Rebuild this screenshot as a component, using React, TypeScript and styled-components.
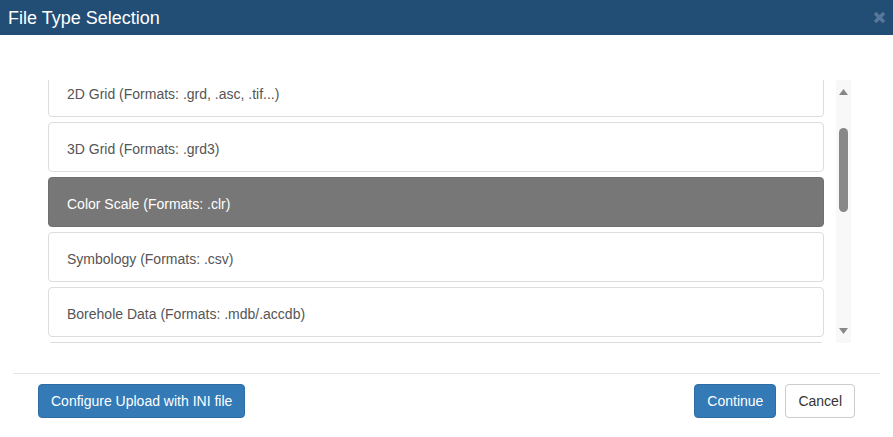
import React, { useLayoutEffect, useRef, useState } from 'react';
import styled, { createGlobalStyle } from 'styled-components';

const GlobalStyle = createGlobalStyle`
  html, body {
    margin: 0;
    padding: 0;
    background: #ffffff;
    font-family: "Liberation Sans", Arial, sans-serif;
  }
  * {
    box-sizing: border-box;
  }
`;

const Dialog = styled.div`
  width: 893px;
  height: 437px;
  background: #ffffff;
  display: flex;
  flex-direction: column;
`;

const Header = styled.div`
  height: 35px;
  background: #224e76;
  display: flex;
  align-items: center;
  justify-content: space-between;
  padding: 0 7px 0 8px;
`;

const Title = styled.h4`
  margin: 0;
  color: #ffffff;
  font-size: 18px;
  font-weight: normal;
  line-height: 1;
`;

const CloseButton = styled.button`
  border: none;
  background: transparent;
  padding: 0;
  margin: 0;
  width: 14px;
  height: 14px;
  display: flex;
  align-items: center;
  justify-content: center;
  cursor: pointer;
`;

const Body = styled.div`
  padding: 45px 42px 30px 48px;
`;

const ListFrame = styled.div`
  height: 263px;
  display: flex;
`;

const ScrollList = styled.div`
  flex: 1;
  height: 100%;
  overflow-y: scroll;
  padding: 35px 12px 35px 0;
  scrollbar-width: none;
  &::-webkit-scrollbar {
    display: none;
  }
`;

const Item = styled.div<{ $selected?: boolean }>`
  height: 50px;
  margin-bottom: 5px;
  padding: 3px 18px 0 18px;
  display: flex;
  align-items: center;
  border: 1px solid ${(p) => (p.$selected ? '#6f6f6f' : '#dddddd')};
  border-radius: 4px;
  background: ${(p) => (p.$selected ? '#777777' : '#ffffff')};
  color: ${(p) => (p.$selected ? '#ffffff' : '#555555')};
  font-size: 14px;
  cursor: pointer;
`;

const Track = styled.div`
  width: 15px;
  height: 100%;
  background: #f8f8f8;
  display: flex;
  flex-direction: column;
`;

const Arrow = styled.div<{ $down?: boolean }>`
  height: 15px;
  display: flex;
  justify-content: center;
  align-items: ${(p) => (p.$down ? 'flex-start' : 'flex-end')};
`;

const Rail = styled.div`
  flex: 1;
  position: relative;
`;

const Thumb = styled.div`
  position: absolute;
  left: 3px;
  right: 3px;
  background: #888888;
  border-radius: 5px;
`;

const Footer = styled.div`
  margin: 0 13px;
  border-top: 1px solid #e5e5e5;
  padding: 10px 25px 0 25px;
  display: flex;
  align-items: center;
  justify-content: space-between;
`;

const ButtonGroup = styled.div`
  display: flex;
  gap: 9px;
`;

const Button = styled.button<{ $primary?: boolean }>`
  height: 34px;
  padding: 0 12px;
  border-radius: 4px;
  font-family: "Liberation Sans", Arial, sans-serif;
  font-size: 14px;
  border: 1px solid ${(p) => (p.$primary ? '#2e6da4' : '#cccccc')};
  background: ${(p) => (p.$primary ? '#337ab7' : '#ffffff')};
  color: ${(p) => (p.$primary ? '#ffffff' : '#333333')};
  cursor: pointer;
`;

const fileTypes = [
  'Point Data (Formats: .csv, .txt)',
  '2D Grid (Formats: .grd, .asc, .tif...)',
  '3D Grid (Formats: .grd3)',
  'Color Scale (Formats: .clr)',
  'Symbology (Formats: .csv)',
  'Borehole Data (Formats: .mdb/.accdb)',
  'Cross Section (Formats: .xsc)',
  'Well Logs (Formats: .las)',
  'Image (Formats: .png, .jpg)',
  '3D Model (Formats: .obj)',
  'Seismic Data (Formats: .segy)',
  'Contours (Formats: .dxf)',
];

const RAIL = 233;

const App: React.FC = () => {
  const [selected, setSelected] = useState(3);
  const [thumb, setThumb] = useState({ top: 0, height: 0 });
  const listRef = useRef<HTMLDivElement>(null);

  const updateThumb = () => {
    const el = listRef.current;
    if (!el) return;
    setThumb({
      top: (RAIL * el.scrollTop) / el.scrollHeight,
      height: (RAIL * el.clientHeight) / el.scrollHeight,
    });
  };

  useLayoutEffect(() => {
    if (listRef.current) {
      listRef.current.scrollTop = 103;
    }
    updateThumb();
  }, []);

  return (
    <>
      <GlobalStyle />
      <Dialog>
        <Header>
          <Title>File Type Selection</Title>
          <CloseButton aria-label="Close">
            <svg width="13" height="13" viewBox="0 0 13 13">
              <path d="M2 2 L11 11 M11 2 L2 11" stroke="#57789a" strokeWidth="3.4" />
            </svg>
          </CloseButton>
        </Header>
        <Body>
          <ListFrame>
            <ScrollList ref={listRef} onScroll={updateThumb}>
              {fileTypes.map((t, i) => (
                <Item key={t} $selected={i === selected} onClick={() => setSelected(i)}>
                  {t}
                </Item>
              ))}
            </ScrollList>
            <Track>
              <Arrow>
                <svg width="9" height="6" viewBox="0 0 9 6">
                  <path d="M4.5 0 L9 6 L0 6 Z" fill="#888888" />
                </svg>
              </Arrow>
              <Rail>
                <Thumb style={{ top: thumb.top, height: thumb.height }} />
              </Rail>
              <Arrow $down>
                <svg width="9" height="6" viewBox="0 0 9 6">
                  <path d="M0 0 L9 0 L4.5 6 Z" fill="#888888" />
                </svg>
              </Arrow>
            </Track>
          </ListFrame>
        </Body>
        <Footer>
          <Button $primary>Configure Upload with INI file</Button>
          <ButtonGroup>
            <Button $primary>Continue</Button>
            <Button>Cancel</Button>
          </ButtonGroup>
        </Footer>
      </Dialog>
    </>
  );
};

export default App;
